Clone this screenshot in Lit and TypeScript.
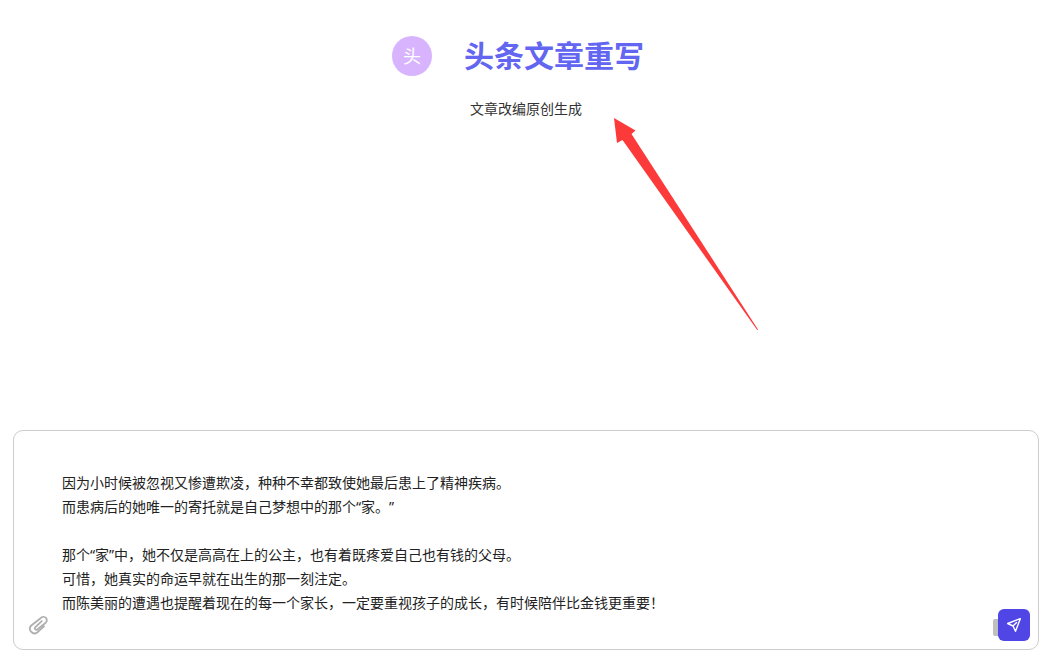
import { LitElement, html, css } from "lit";
import { customElement, state } from "lit/decorators.js";

const DRAFT = `因为小时候被忽视又惨遭欺凌，种种不幸都致使她最后患上了精神疾病。
而患病后的她唯一的寄托就是自己梦想中的那个“家。”

那个“家”中，她不仅是高高在上的公主，也有着既疼爱自己也有钱的父母。
可惜，她真实的命运早就在出生的那一刻注定。
而陈美丽的遭遇也提醒着现在的每一个家长，一定要重视孩子的成长，有时候陪伴比金钱更重要！`;

@customElement("app-root")
export class AppRoot extends LitElement {
  static styles = css`
    :host {
      display: flex;
      flex-direction: column;
      box-sizing: border-box;
      min-height: 100vh;
      padding: 36px 18px 6px 13px;
      background: #fff;
      color: #333;
      font-family: "Noto Sans", "Noto Sans CJK SC", sans-serif;
      font-size: 14px;
      line-height: 24px;
    }
    .intro {
      position: relative;
      flex: 1;
      display: flex;
      flex-direction: column;
      align-items: center;
      gap: 21px;
    }
    .heading {
      display: flex;
      align-items: center;
      gap: 32px;
      padding-right: 16px;
    }
    .avatar {
      display: grid;
      place-items: center;
      width: 40px;
      height: 40px;
      border-radius: 50%;
      background: #d8b4fe;
      color: #fff;
      font-size: 18px;
    }
    h1 {
      margin: 0;
      color: #6366f1;
      font-size: 30px;
      line-height: 40px;
      font-weight: 700;
    }
    p {
      margin: 0;
    }
    .arrow {
      position: absolute;
      top: 82px;
      left: calc(50% + 88px);
      width: 146px;
      height: 214px;
      pointer-events: none;
    }
    .composer {
      position: relative;
      display: flex;
      border: 1px solid #ccc;
      border-radius: 10px;
    }
    textarea {
      flex: 1;
      box-sizing: border-box;
      min-width: 0;
      margin: 0;
      padding: 40px 48px 34px;
      border: 0;
      outline: 0;
      resize: none;
      overflow: hidden;
      background: transparent;
      color: #222;
      font: inherit;
      text-spacing-trim: space-all;
    }
    button {
      padding: 0;
      border: 0;
      cursor: pointer;
    }
    .attach {
      position: absolute;
      left: 14px;
      bottom: 14px;
      width: 20px;
      height: 20px;
      background: none;
      color: #b0b0b0;
    }
    .grip {
      position: absolute;
      right: 36px;
      bottom: 13px;
      width: 9px;
      height: 17px;
      border-radius: 2px;
      background: #bfbfbf;
    }
    .send {
      position: absolute;
      right: 8px;
      bottom: 8px;
      display: grid;
      place-items: center;
      width: 32px;
      height: 32px;
      border-radius: 6px;
      background: #4f46e5;
      color: #fff;
    }
    svg {
      display: block;
    }
  `;

  @state() private draft = DRAFT;

  private onInput(event: Event) {
    this.draft = (event.target as HTMLTextAreaElement).value;
  }

  render() {
    return html`
      <main class="intro">
        <div class="heading">
          <span class="avatar">头</span>
          <h1>头条文章重写</h1>
        </div>
        <p>文章改编原创生成</p>
        <svg class="arrow" viewBox="0 0 146 214" fill="#fd3a3a" aria-hidden="true">
          <path d="M0 0 21.5 12.5 17.5 16 144 211.5 143.2 212 8.5 22 3 25Z" />
        </svg>
      </main>
      <form class="composer" @submit=${(e: Event) => e.preventDefault()}>
        <textarea rows="6" aria-label="文章内容" spellcheck="false" .value=${this.draft} @input=${this.onInput}></textarea>
        <button class="attach" type="button" aria-label="添加附件">
          <svg width="20" height="20" viewBox="0 0 20 20" fill="none" stroke="currentColor" stroke-width="1.8" stroke-linecap="round">
            <path d="M13.7 6.2 7.2 12.400a1.500 1.500 0 0 0 2.100 2.100L17.700 7.700a3.300 3.300 0 0 0-4.500-5L3.300 10.500a4.600 4.600 0 0 0 5.900 7L16 11.400M7.200 12.400 13.200 6.600" />
          </svg>
        </button>
        <span class="grip"></span>
        <button class="send" type="submit" aria-label="发送">
          <svg width="16" height="16" viewBox="0 0 16 16" fill="none" stroke="currentColor" stroke-width="1.4" stroke-linejoin="round" stroke-linecap="round">
            <path d="M14.300 1.700 1.700 6.500 7 9 9.500 14.300ZM7 9 10.600 5.400" />
          </svg>
        </button>
      </form>
    `;
  }
}
